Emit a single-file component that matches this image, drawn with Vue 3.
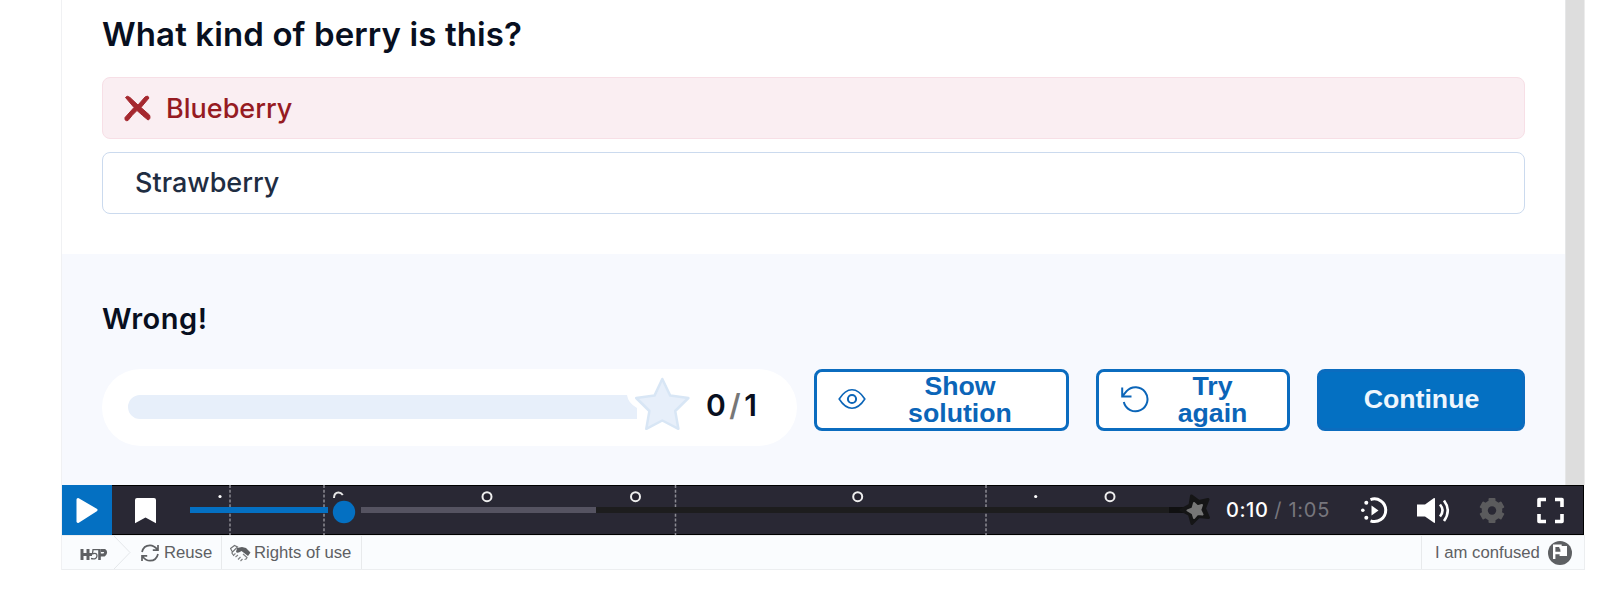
<script setup>
const chapters = [230, 324, 675.5, 986]
const rings = [487, 635.5, 857.7, 1110]
const dots = [220, 1035.7]
</script>

<template>
  <div class="page">
    <div class="frame">
      <div class="stage">
        <main class="quiz">
          <section class="question">
            <h1>What kind of berry is this?</h1>
            <div class="option wrong">
              <svg width="27" height="28" viewBox="0 0 27 28"><path d="M1.500 3.500Q3 1 6 3.500L14 11L21 3Q24 .500 25 4L17 13.500L25.500 21Q27 25 24 26Q19 22 13 16.500Q8 21 4 26.500Q.500 27.500 1 23.500L10 13.500Z" fill="#a5282f" stroke="#a5282f" stroke-width="1" stroke-linejoin="round" /></svg>
              <span>Blueberry</span>
            </div>
            <div class="option"><span>Strawberry</span></div>
          </section>
          <section class="feedback">
            <h2>Wrong!</h2>
            <div class="actions">
              <div class="score">
                <svg width="594" height="77" viewBox="102 369 594 77">
                  <path d="M140 395H627Q628 403 637 408V419H140A12 12 0 0 1 140 395Z" fill="#e7effa" />
                  <path d="M662.3 379L670.2 395.6L688.4 398L675.2 411L678.4 428.8L662.3 420.5L646.3 428.8L649.4 411L636.2 398L654.5 395.6Z" fill="#e7effa" stroke="#d8e6f5" stroke-width="2.5" stroke-linejoin="round" />
                </svg>
                <div class="points"><b>0</b><i>/</i><b>1</b></div>
              </div>
              <button class="btn show">
                <svg width="28" height="22" viewBox="0 0 28 22" fill="none" stroke="#0b65b8"><path d="M1.2 11Q7 1.800 14 1.800T26.8 11Q21 20.200 14 20.200T1.2 11Z" stroke-width="1.6" /><circle cx="14" cy="11" r="4.1" stroke-width="2" /></svg>
                <span>Show<br>solution</span>
              </button>
              <button class="btn again">
                <svg width="30" height="28" viewBox="0 0 30 28" fill="none" stroke="#0b65b8" stroke-width="2"><path d="M2.2 2.400V11.400H11.500M2.500 11.200L6.600 6.200A12 12 0 1 1 3.800 17" /></svg>
                <span>Try<br>again</span>
              </button>
              <button class="btn primary">Continue</button>
            </div>
          </section>
        </main>
        <div class="scroll"></div>
      </div>

      <div class="controls">
        <div class="play"><svg width="50" height="50" viewBox="0 0 50 50"><path d="M16 14.500L34 25L16 36.500Z" fill="#fff" stroke="#fff" stroke-width="3" stroke-linejoin="round" /></svg></div>
        <svg class="timeline" width="1106" height="50" viewBox="112 485 1106 50">
          <path d="M137 498h17q2 0 2 2v23.200L145.500 517.500L135 523.200V500Q135 498 137 498Z" fill="#fff" />
          <g stroke="#8c8b93" stroke-width="1.5" stroke-dasharray="3 1.8"><line v-for="x in chapters" :key="x" :x1="x" :x2="x" y1="485" y2="535" /></g>
          <rect x="596" y="507" width="573" height="6" fill="#1d1d1e" />
          <rect x="1169" y="507" width="17" height="6" fill="#101011" />
          <rect x="361" y="507" width="235" height="6" fill="#555361" />
          <rect x="190" y="507" width="138" height="6" fill="#0470c2" />
          <circle v-for="x in rings" :key="x" :cx="x" cy="496.700" r="4.500" fill="#25232f" stroke="#eee" stroke-width="2" />
          <circle v-for="x in dots" :key="x" :cx="x" cy="496.500" r="1.600" fill="#fff" />
          <path d="M334 498Q334 492.500 338.500 492.500Q341 492.500 342.800 495" fill="none" stroke="#e6e6e6" stroke-width="2" />
          <circle cx="344" cy="512" r="11.200" fill="#0470c2" />
          <path d="M1191.500 496L1199 501.500L1208 499.500L1204.500 508.500L1208.500 517.500L1199 516.500L1192 523.500L1189.500 514.500L1181 510L1190 505Z" fill="#151516" stroke="#151516" stroke-width="3" stroke-linejoin="round" />
          <path d="M1194 503L1197.500 506.300L1202 505L1200.300 510L1202.500 514.500L1197.500 514L1194 518L1192.500 513.300L1187.500 510.500L1192.500 508.300Z" fill="#777" stroke="#777" stroke-width="2" stroke-linejoin="round" />
        </svg>
        <div class="time"><span>0:10</span> <em>/ 1:05</em></div>
        <svg class="icons" width="244" height="50" viewBox="1340 485 244 50">
          <path d="M1370.500 499.600A11.300 11.300 0 1 1 1370.500 520.800" fill="none" stroke="#fff" stroke-width="3" />
          <path d="M1371.500 505.500L1378.500 510.500L1371.500 515.500Z" fill="#fff" />
          <g fill="#fff"><circle cx="1366.300" cy="502.800" r="2" /><circle cx="1362.800" cy="510.300" r="1.800" /><circle cx="1366.300" cy="517.800" r="2" /></g>
          <path d="M1417 504.500H1425L1434 498Q1435 497.500 1435 499V522Q1435 523.500 1434 522.800L1425 516.500H1417Z" fill="#fff" />
          <path d="M1440 504.500Q1445 510.500 1440 516.500M1444 500.500Q1451.500 510.500 1444 521" fill="none" stroke="#fff" stroke-width="2.600" />
          <g transform="translate(1492 510.500)" fill="#5b5b5d"><rect v-for="a in [0, 60, 120]" :key="a" x="-3.500" y="-12.500" width="7" height="25" rx="1" :transform="`rotate(${a})`" /><circle r="10.300" /><circle r="4.200" fill="#292834" /></g>
          <path d="M1539 507V499.500H1546M1555 499.500H1562V507M1562 514V521.500H1555M1546 521.500H1539V514" fill="none" stroke="#fff" stroke-width="3.600" stroke-linejoin="round" />
        </svg>
      </div>

      <footer>
        <div class="brand">
          <svg width="28" height="13" viewBox="0 0 28 13" fill="none" stroke="#5e6063"><path d="M2 1V12M8 1V12M2 6.500H12M21 2.500H24.500Q27 4.500 24 7H20" stroke-width="3" /><path d="M19.500 1V12" stroke-width="2.600" /><path d="M19 1.700H13L12.500 5.800Q17 4.500 17 8Q16.500 11.800 11 10.500" stroke-width="1.300" /></svg>
        </div>
        <svg class="chev" width="17" height="33" viewBox="0 0 17 33"><path d="M0 0L16 16.500L0 33" fill="none" stroke="#e4e7ea" /></svg>
        <div class="reuse">
          <svg width="18" height="18" viewBox="0 0 18 18" fill="none" stroke="#5e6063" stroke-width="1.700"><path d="M1 8Q2.500 1.300 9 1.300Q13 1.300 16.500 5.500M17 1V6.200H11.800M17 10Q15.500 16.700 9 16.700Q5 16.700 1.500 12.500M1 17V11.800H6.200" /></svg>
          <span>Reuse</span>
        </div>
        <div class="rights">
          <svg width="21" height="18" viewBox="0 0 21 18"><path d="M.500 4.500L4.500 1.500L7.500 3L2.500 8ZM1.500 8.500L4 12" fill="none" stroke="#707274" stroke-width="1.100" /><path d="M7 4L12 3L16 4L20.500 8.500L18 12L11.500 7Q7.500 10 6 8Z" fill="#5e6063" /><path d="M3.500 11L5.500 9.500M5.500 13L8 11M8 15.500L10.500 13M10.500 17L12.500 15M13 10L17 13.500Q16.500 15.500 14.500 15.500" fill="none" stroke="#808284" stroke-width="1.200" /></svg>
          <span>Rights of use</span>
        </div>
        <div class="confused">
          <span>I am confused</span>
          <svg width="24" height="24" viewBox="0 0 24 24"><circle cx="12" cy="12" r="12" fill="#5e6063" /><path d="M6.200 18V4.700H12.500V6.200H17.800V13.700H12.800V12H7" fill="none" stroke="#fff" stroke-width="2.400" /><path d="M12 6H18V13.500H12.800Z" fill="#fff" /></svg>
        </div>
      </footer>
    </div>
  </div>
</template>

<style>
body { margin: 0; background: #fff; overflow: hidden; }
</style>
<style scoped>
* { box-sizing: border-box; }
.page { height: 608px; padding-left: 61px; }
.frame { width: 1524px; height: 570px; border-left: 1px solid #f0f1f3; }
.stage { display: flex; height: 485px; }
.quiz { width: 1503px; font-family: Inter, sans-serif; }
.question { height: 254px; padding: 14px 40px 0; }
h1 { margin: 0 0 23px; font-size: 33px; line-height: 40px; font-weight: 600; letter-spacing: .11px; color: #080f20; white-space: nowrap; }
.option { height: 62px; border: 1px solid #cbdaee; border-radius: 8px; margin: 0 0 13px; display: flex; align-items: center; padding: 0 0 1px 32px; color: #1f2d42; font-size: 27px; font-weight: 500; }
.option.wrong { color: #961b22; background: #faeef2; border-color: #f7dfe6; padding: 0 0 0 21px; }
.option svg { margin-right: 15px; }
.feedback { height: 231px; padding: 47px 40px 0; background: #f7f9fe; }
h2 { margin: 0 0 32px; font-size: 29px; line-height: 36px; font-weight: 600; letter-spacing: .55px; color: #080f20; }
.actions { display: flex; height: 77px; }
.score { width: 695px; height: 77px; background: #fff; border-radius: 39px; display: flex; margin-right: 17px; }
.points { display: flex; align-items: center; margin-left: 10px; padding-bottom: 5px; font-size: 30px; font-weight: 600; color: #080f20; gap: 3.5px; }
.points b { font-weight: 600; }
.points i { font-style: normal; font-weight: 600; color: #777; }
.btn { height: 62px; border: 3px solid #0b6cbf; border-radius: 8px; background: #fff; color: #0b65b8; font: bold 26.700px/27px "Liberation Sans", Arial, sans-serif; display: flex; align-items: center; padding: 0; text-align: center; }
.btn svg { flex: none; margin-top: -3px; }
.btn span { flex: 1; }
.show { width: 255px; margin-right: 27px; padding: 0 49px 0 21px; }
.show span { margin-left: 37px; }
.again { width: 194px; margin-right: 27px; padding: 0 39px 0 21px; }
.again span { margin-left: 27px; }
.primary { width: 208px; justify-content: center; background: #0470c2; color: #eef6fd; padding: 0 0 2px 1px; }
.scroll { width: 20px; background: #ddd; border-left: 1px solid #e6e7e8; border-right: 1px solid #ececec; }
.controls { width: 1522px; height: 50px; display: flex; background: #292834; box-shadow: inset 0 1px #000, inset 0 -1px #000, inset -1px 0 #000; }
.controls svg { display: block; flex: none; }
.play { width: 50px; background: #0470c2; }
.time { width: 122px; padding-left: 8px; font: 500 20px/50px Inter, sans-serif; letter-spacing: .55px; color: #fff; white-space: nowrap; }
.time em { font-style: normal; font-weight: 400; color: #77767d; letter-spacing: .7px; }
footer { height: 35px; display: flex; align-items: center; background: #fafcfe; border: solid #eceef0; border-width: 1px 1px 1px 0; font: 16.700px/33px "Liberation Sans", Arial, sans-serif; color: #5e6063; }
footer svg { flex: none; }
footer div { height: 33px; display: flex; align-items: center; white-space: nowrap; }
.brand { width: 52px; padding: 3px 0 0 18px; }
.reuse { width: 91px; padding-left: 10px; gap: 5px; border-right: 1px solid #e8eaec; }
.rights { width: 140px; padding-left: 8px; gap: 3px; border-right: 1px solid #e8eaec; }
.confused { margin-left: auto; width: 163px; border-left: 1px solid #e8eaec; padding-left: 13px; gap: 8px; }
</style>
